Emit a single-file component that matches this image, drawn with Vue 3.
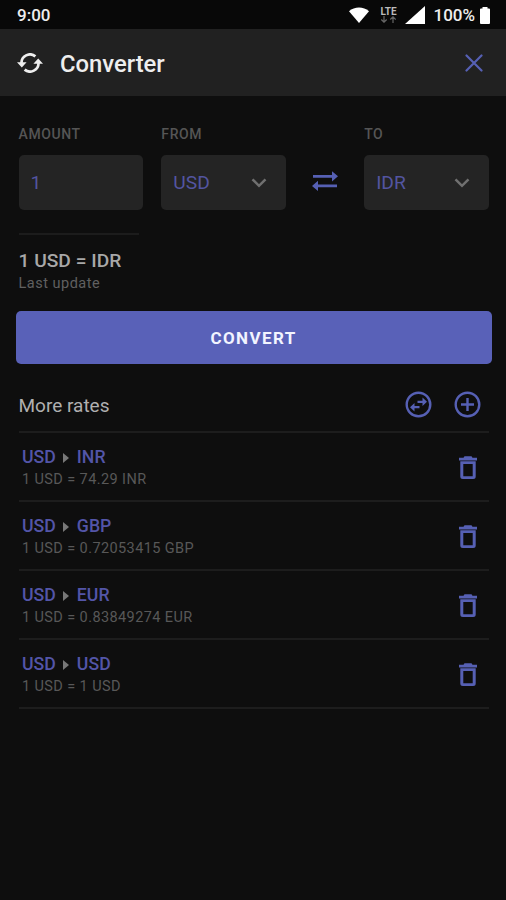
<template>
  <div class="screen">
    <div class="status-bar">
      <span class="time">9:00</span>
      <svg class="wifi" width="20" height="16" viewBox="0 0 20 16">
        <path d="M0 4.2C5.6-.8 14.4-.8 20 4.2L10 16z" fill="#fff" />
      </svg>
      <div class="lte">
        <span>LTE</span>
        <svg width="16" height="7" viewBox="0 0 16 7">
          <path d="M4 0v6M1.3 3.5L4 6.2l2.7-2.7M13 7V1M10.3 3.5L13 .8l2.7 2.7" fill="none" stroke="#666" stroke-width="1.2" />
        </svg>
      </div>
      <svg class="signal" width="20" height="18" viewBox="0 0 20 18">
        <path d="M20 0v18H0z" fill="#fff" />
      </svg>
      <span class="percent">100%</span>
      <svg class="battery" width="10" height="17" viewBox="0 0 10 17">
        <path d="M2.5 0h5v1.5H9q1 0 1 1V16q0 1-1 1H1q-1 0-1-1V2.5q0-1 1-1h1.5z" fill="#fff" />
      </svg>
    </div>

    <header class="header">
      <svg class="logo" width="26" height="20" viewBox="0 0 26 20">
        <g fill="none" stroke="#eee" stroke-width="2.7">
          <path d="M4.5 10.5A8.5 8.5 0 0 1 18.4 3.4" />
          <path d="M21.5 9.5A8.5 8.5 0 0 1 7.6 16.6" />
        </g>
        <path d="M0 9.3h9.6L4.8 14.6zM16.4 10.7H26L21.2 5.4z" fill="#eee" />
      </svg>
      <h1>Converter</h1>
      <button class="icon-btn close">
        <svg width="18" height="18" viewBox="0 0 18 18">
          <path d="M1.5 1.5l15 15M16.5 1.5l-15 15" fill="none" stroke="#5660b4" stroke-width="2.2" stroke-linecap="round" />
        </svg>
      </button>
    </header>

    <main class="content">
      <div class="form">
        <div class="field">
          <label>AMOUNT</label>
          <div class="box">{{ amount }}</div>
        </div>
        <div class="field">
          <label>FROM</label>
          <div class="box">
            {{ from }}
            <svg width="16" height="10" viewBox="0 0 16 10"><path d="M1.5 1.3L8 7.8l6.5-6.5" /></svg>
          </div>
        </div>
        <button class="icon-btn swap" @click="swap">
          <svg width="26" height="20" viewBox="0 0 26 20" fill="#5660b4">
            <path d="M1 4h19V.2L26 5.3 20 10.4V6.7H1zM25 13.5H6V9.8L0 14.9 6 20v-3.8h19z" />
          </svg>
        </button>
        <div class="field">
          <label>TO</label>
          <div class="box">
            {{ to }}
            <svg width="16" height="10" viewBox="0 0 16 10"><path d="M1.5 1.3L8 7.8l6.5-6.5" /></svg>
          </div>
        </div>
      </div>

      <div class="result">
        <div class="result-value">{{ amount }} {{ from }} = {{ to }}</div>
        <div class="result-date">Last update</div>
      </div>

      <button class="btn-convert">CONVERT</button>

      <div class="rates-head">
        <h2>More rates</h2>
        <button class="icon-btn">
          <svg width="27" height="27" viewBox="0 0 27 27" fill="none" stroke="#5660b4">
            <circle cx="13.5" cy="13.5" r="11.8" stroke-width="2.4" />
            <path d="M12.5 10.8h6M14.5 16.2h-6" stroke-width="2.2" />
            <path d="M17.5 6.5l4.5 4.3-4.5 4.3zM9.5 11.9l-4.5 4.3 4.5 4.3z" fill="#5660b4" stroke="none" />
          </svg>
        </button>
        <button class="icon-btn">
          <svg width="27" height="27" viewBox="0 0 27 27" fill="none" stroke="#5660b4">
            <circle cx="13.5" cy="13.5" r="11.8" stroke-width="2.4" />
            <path d="M13.5 7v13M7 13.5h13" stroke-width="2.4" />
          </svg>
        </button>
      </div>

      <ul class="rates">
        <li v-for="rate in rates" :key="rate.to">
          <div class="rate-info">
            <div class="pair">
              <span>{{ rate.from }}</span>
              <svg width="6" height="10" viewBox="0 0 6 10"><path d="M0 0l6 5-6 5z" fill="#777" /></svg>
              <span>{{ rate.to }}</span>
            </div>
            <div class="rate-value">1 {{ rate.from }} = {{ rate.value }} {{ rate.to }}</div>
          </div>
          <button class="icon-btn">
            <svg width="18" height="23" viewBox="0 0 18 23">
              <path d="M0 1.8h4.5L5.5.2h7l1 1.6H18v2.6H0zM1.3 5.2h15.4v15.3q0 2.5-2.5 2.5H3.8q-2.5 0-2.5-2.5zM4.3 8v12.2h9.4V8z" fill="#5660b4" fill-rule="evenodd" />
            </svg>
          </button>
        </li>
      </ul>
    </main>
  </div>
</template>

<script setup>
import { ref } from 'vue'

const amount = ref('1')
const from = ref('USD')
const to = ref('IDR')

const rates = [
  { from: 'USD', to: 'INR', value: '74.29' },
  { from: 'USD', to: 'GBP', value: '0.72053415' },
  { from: 'USD', to: 'EUR', value: '0.83849274' },
  { from: 'USD', to: 'USD', value: '1' }
]

function swap() {
  const tmp = from.value
  from.value = to.value
  to.value = tmp
}
</script>

<style>
body { margin: 0; background: #0e0e0e; }
</style>

<style scoped>
.screen {
  height: 900px;
  box-sizing: border-box;
  background: #0e0e0e;
  font-family: Roboto, "Liberation Sans", sans-serif;
  overflow: hidden;
}
svg { display: block; flex: none; }
h1, h2, ul { margin: 0; padding: 0; list-style: none; }
.icon-btn { background: none; border: none; padding: 0; cursor: pointer; }

.status-bar {
  height: 29px;
  box-sizing: border-box;
  padding: 1px 16px 0 17px;
  display: flex; align-items: center;
  background: #080808;
  color: #eee;
  font-size: 17px;
  font-weight: 500;
}
.time { margin-right: auto; }
.wifi { margin-right: 11px; }
.lte { width: 18px; margin-right: 7px; font-size: 10px; line-height: 9px; font-weight: 700; color: #bbb; }
.signal { margin-right: 8px; }
.percent { margin-right: 5px; }

.header {
  height: 67px;
  box-sizing: border-box;
  padding: 0 23px 0 17px;
  display: flex; align-items: center;
  background: #212121;
}
h1 { margin: 2px 0 0 17px; font-size: 23.8px; line-height: 28px; font-weight: 500; color: #eee; }
.close { margin-left: auto; }

.content { padding: 28px 17px 0 18.5px; }
.form { display: grid; grid-template-columns: 1fr 1fr 42px 1fr; column-gap: 18px; align-items: end; }
label { display: block; height: 20px; line-height: 20px; margin-bottom: 11px; font-size: 14px; font-weight: 500; letter-spacing: 0.6px; color: #555; }
.box {
  height: 54.5px;
  box-sizing: border-box;
  padding: 1px 19px 0 12px;
  display: flex; align-items: center; justify-content: space-between;
  border-radius: 5px;
  background: #242424;
  color: #5355a0;
  font-size: 19.2px;
}
.box path { fill: none; stroke: #707070; stroke-width: 2.5; }
.swap { height: 54.5px; padding-bottom: 2px; display: flex; align-items: center; justify-content: center; }

.result { margin-top: 23px; }
.result::before { content: ""; display: block; width: 120px; height: 2px; background: #1c1c1c; }
.result-value { margin-top: 13px; line-height: 25px; font-size: 19.2px; font-weight: 500; color: #a8a8a8; }
.result-date { margin-top: 1px; line-height: 20px; font-size: 14.5px; letter-spacing: 0.5px; color: #606060; }

.btn-convert {
  display: block;
  width: 476px; height: 53.5px;
  margin: 17px -3px 0;
  padding: 2px 0 0;
  border: none; border-radius: 5px;
  background: #5961b8;
  color: #f2f4ff;
  font: 700 17px Roboto, "Liberation Sans", sans-serif;
  letter-spacing: 1.4px;
}

.rates-head {
  height: 69px;
  box-sizing: border-box;
  padding: 13px 8.5px 0 0;
  display: flex; align-items: center; gap: 21.5px;
  border-bottom: 2px solid #1d1d1d;
}
h2 { margin: 2px auto 0 0; font-size: 19px; font-weight: 400; color: #b0b0b0; }

.rates li {
  height: 69px;
  box-sizing: border-box;
  padding: 1px 12.5px 0 3.5px;
  display: flex; align-items: center; justify-content: space-between;
  border-bottom: 2px solid #1d1d1d;
}
.rate-info { padding-top: 2px; }
.pair { display: flex; align-items: center; gap: 7.5px; line-height: 23px; font-size: 17.7px; font-weight: 500; color: #5355a8; }
.rate-value { margin-top: 1px; line-height: 20px; font-size: 14.5px; letter-spacing: 0.4px; color: #585858; }
</style>
